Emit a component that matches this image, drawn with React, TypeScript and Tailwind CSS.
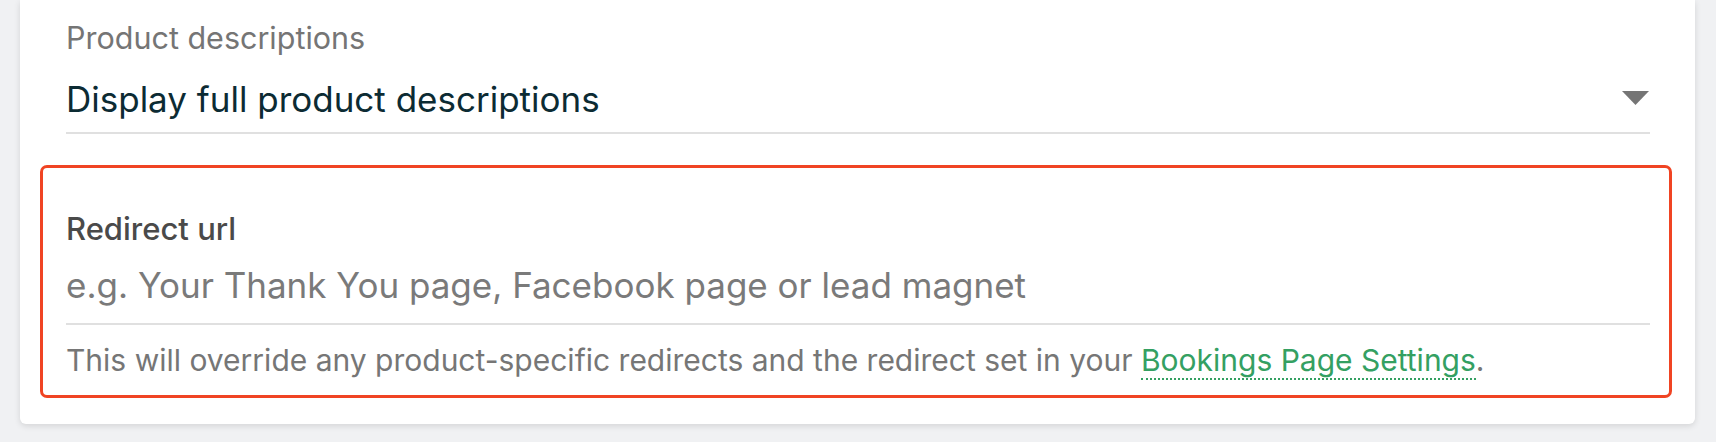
import React from 'react';

const font = { fontFamily: 'Inter, "Noto Sans", sans-serif' };

const CaretDown: React.FC = () => (
  <svg width="27" height="14" viewBox="7 10 10 5" preserveAspectRatio="none" className="shrink-0 mr-[1px] mb-[2px]">
    <path d="M7 10l5 5 5-5z" fill="#757575" />
  </svg>
);

export default function App() {
  return (
    <div className="w-[1716px] h-[442px] bg-[#f0f1f3] overflow-hidden" style={font}>
      <div className="ml-[20px] w-[1675px] h-[424px] bg-white rounded-b-[6px] shadow-[0_2px_6px_rgba(0,0,0,0.12)] pt-[20px]">
        {/* select field */}
        <div className="pl-[46px] pr-[45px]">
          <div className="text-[30.5px] leading-[36px] text-[#757575]">Product descriptions</div>
          <div className="mt-[22px] flex items-center justify-between border-b-2 border-[#e0e0e0] pb-[12px]">
            <span className="text-[35px] leading-[42px] text-[#0c2b33]">Display full product descriptions</span>
            <CaretDown />
          </div>
        </div>

        {/* redirect field, flagged */}
        <div className="mt-[31px] ml-[20px] mr-[23px] border-[3px] border-[#f04423] rounded-[7px] pt-[42px] pb-[17px] pl-[23px] pr-[19px]">
          <div className="text-[31px] leading-[38px] font-medium text-[#4a4a4a]">Redirect url</div>
          <div className="mt-[16px] border-b-2 border-[#e0e0e0] pb-[17px]">
            <input
              readOnly
              placeholder="e.g. Your Thank You page, Facebook page or lead magnet"
              className="w-full text-[35px] leading-[42px] h-[42px] outline-none bg-transparent placeholder:text-[#7a7a7a]"
              style={font}
            />
          </div>
          <p className="mt-[17px] text-[30px] leading-[36px] text-[#767676]">
            This will override any product-specific redirects and the redirect set in your{' '}
            <a className="text-[#34a062] border-b-2 border-dotted border-[#34a062]">Bookings Page Settings</a>.
          </p>
        </div>
      </div>
    </div>
  );
}
